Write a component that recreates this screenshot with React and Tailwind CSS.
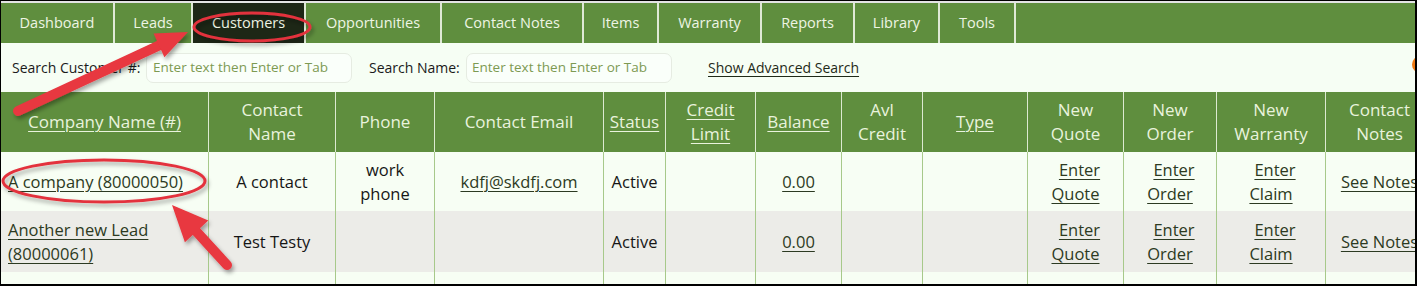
import React from "react";

const tabs = [
  { label: "Dashboard", w: "w-[114px]" },
  { label: "Leads", w: "w-[78px]" },
  { label: "Customers", w: "w-[113px]", active: true },
  { label: "Opportunities", w: "w-[136px]" },
  { label: "Contact Notes", w: "w-[142px]" },
  { label: "Items", w: "w-[75px]" },
  { label: "Warranty", w: "w-[103px]" },
  { label: "Reports", w: "w-[93px]" },
  { label: "Library", w: "w-[85px]" },
  { label: "Tools", w: "w-[76px]" },
];

const cols =
  "grid grid-cols-[208px_127px_99px_169px_62px_90px_86px_81px_105px_96px_93px_109px_108px]";

const headers = [
  { t: ["Company Name (#)"], u: true },
  { t: ["Contact", "Name"] },
  { t: ["Phone"] },
  { t: ["Contact Email"] },
  { t: ["Status"], u: true },
  { t: ["Credit", "Limit"], u: true },
  { t: ["Balance"], u: true },
  { t: ["Avl", "Credit"] },
  { t: ["Type"], u: true },
  { t: ["New", "Quote"] },
  { t: ["New", "Order"] },
  { t: ["New", "Warranty"] },
  { t: ["Contact", "Notes"] },
];

function Lnk({ children, className = "" }) {
  return <span className={"underline underline-offset-[3px] decoration-1 text-[#2c3a22] " + className}>{children}</span>;
}

function EnterCell({ second, bg }) {
  return (
    <div className={"flex flex-col items-center justify-center border-r border-[#a7c98a] " + bg}>
      <Lnk className="pl-[8px] block">Enter</Lnk>
      <Lnk className="block">{second}</Lnk>
    </div>
  );
}

function Row({ bg, company, contact, phone, email, h }) {
  const cell = "flex items-center justify-center text-center border-r border-[#a7c98a] " + bg;
  return (
    <div className={cols + " " + h}>
      <div className={"flex items-center pl-[7px] pr-2 border-r border-[#a7c98a] " + bg}>
        <Lnk>{company}</Lnk>
      </div>
      <div className={cell}>{contact}</div>
      <div className={cell + " flex-col"}>{phone}</div>
      <div className={cell}>{email ? <Lnk>{email}</Lnk> : null}</div>
      <div className={cell}>Active</div>
      <div className={cell}></div>
      <div className={cell}><Lnk>0.00</Lnk></div>
      <div className={cell}></div>
      <div className={cell}></div>
      <EnterCell second="Quote" bg={bg} />
      <EnterCell second="Order" bg={bg} />
      <EnterCell second="Claim" bg={bg} />
      <div className={cell}><Lnk>See Notes</Lnk></div>
    </div>
  );
}

export default function App() {
  return (
    <div className="relative w-[1417px] h-[286px] overflow-hidden border-t border-l border-r-2 border-b-2 border-black bg-[#f6fdf3] font-['Open_Sans',sans-serif]">
      <div className="h-[2px] bg-[#e4e4e4]" />
      {/* nav */}
      <div className="flex h-[40px] bg-[#5f8e3e]">
        {tabs.map((t) => (
          <div
            key={t.label}
            className={
              "flex items-center justify-center border-r-2 border-[#dfe9d6] text-[14.5px] text-[#eef5e4] " +
              t.w +
              (t.active ? " bg-[#1d2716]" : "")
            }
          >
            {t.label}
          </div>
        ))}
      </div>
      {/* search row */}
      <div className="flex items-center h-[49px] bg-[#f6fef4] text-[14px] text-[#1a1a1a]">
        <div className="w-[145px] pl-[11px] whitespace-nowrap">Search Customer #:</div>
        <div className="w-[206px] h-[30px] rounded-[7px] border border-[#e6ece2] bg-[#fafffa] flex items-center pl-[6px] text-[#7d9a52] text-[13.5px] whitespace-nowrap">
          Enter text then Enter or Tab
        </div>
        <div className="w-[114px] pl-[17px] whitespace-nowrap">Search Name:</div>
        <div className="w-[206px] h-[30px] rounded-[7px] border border-[#e6ece2] bg-[#fafffa] flex items-center pl-[5px] text-[#7d9a52] text-[13.5px] whitespace-nowrap">
          Enter text then Enter or Tab
        </div>
        <div className="pl-[36px] whitespace-nowrap">
          <span className="underline underline-offset-[3px] text-[#1f2a18]">Show Advanced Search</span>
        </div>
      </div>
      {/* table */}
      <div className="text-[16.5px] leading-[24px] text-[#161616]">
        <div className={cols + " h-[60px] bg-[#5f8e3e] text-[17px]"}>
          {headers.map((h, i) => (
            <div
              key={i}
              className="flex flex-col items-center justify-center text-center border-r border-[#dce9d1] text-[#e9f3dd]"
            >
              {h.t.map((l) => (
                <span key={l} className={h.u ? "underline underline-offset-[3px] decoration-1" : ""}>
                  {l}
                </span>
              ))}
            </div>
          ))}
        </div>
        <Row
          h="h-[59px]"
          bg="bg-[#f7fef4]"
          company="A company (80000050)"
          contact="A contact"
          phone={<><span>work</span><span>phone</span></>}
          email="kdfj@skdfj.com"
        />
        <Row
          h="h-[61px]"
          bg="bg-[#ececE8]"
          company={<>Another new Lead<br />(80000061)</>}
          contact="Test Testy"
          phone={null}
          email={null}
        />
        <div className={cols + " h-[40px] bg-[#f7fef4]"}>
          <div className="pl-[9px] pt-[11px] border-r border-[#a7c98a]"><Lnk>Another new Lead ld</Lnk></div>
          <div className="border-r border-[#a7c98a]" />
          <div className="border-r border-[#a7c98a]" />
          <div className="border-r border-[#a7c98a]" />
          <div className="border-r border-[#a7c98a]" />
          <div className="border-r border-[#a7c98a]" />
          <div className="border-r border-[#a7c98a]" />
          <div className="border-r border-[#a7c98a]" />
          <div className="border-r border-[#a7c98a]" />
          <div className="pt-[11px] text-center pl-[8px] border-r border-[#a7c98a]"><Lnk>Enter</Lnk></div>
          <div className="pt-[11px] text-center pl-[8px] border-r border-[#a7c98a]"><Lnk>Enter</Lnk></div>
          <div className="pt-[11px] text-center pl-[8px] border-r border-[#a7c98a]"><Lnk>Enter</Lnk></div>
          <div />
        </div>
      </div>

      {/* orange indicator at right edge */}
      <div className="absolute left-[1411px] top-[55px] w-[17px] h-[17px] rounded-full bg-[#f07a12]" />

      {/* annotations */}
      <svg className="absolute left-[-1px] top-[-1px] pointer-events-none" width="1417" height="286" viewBox="0 0 1417 286">
        <defs>
          <filter id="sh" x="-20%" y="-20%" width="140%" height="140%">
            <feDropShadow dx="2" dy="3" stdDeviation="2" floodColor="#000" floodOpacity="0.35" />
          </filter>
        </defs>
        <g filter="url(#sh)">
          <ellipse cx="252" cy="27" rx="58" ry="14" fill="none" stroke="#e3323d" strokeWidth="3" />
          <line x1="18" y1="111" x2="160" y2="45" stroke="#e8373f" strokeWidth="10" strokeLinecap="round" />
          <polygon points="188,32 153.6,33.6 164.4,57.2" fill="#e8373f" />
          <ellipse cx="104" cy="181" rx="101" ry="21" fill="none" stroke="#e3323d" strokeWidth="3" />
          <line x1="227" y1="265" x2="195" y2="230" stroke="#e8373f" strokeWidth="10" strokeLinecap="round" />
          <polygon points="172,205 208.3,220.4 184.9,242.2" fill="#e8373f" />
        </g>
      </svg>
    </div>
  );
}
